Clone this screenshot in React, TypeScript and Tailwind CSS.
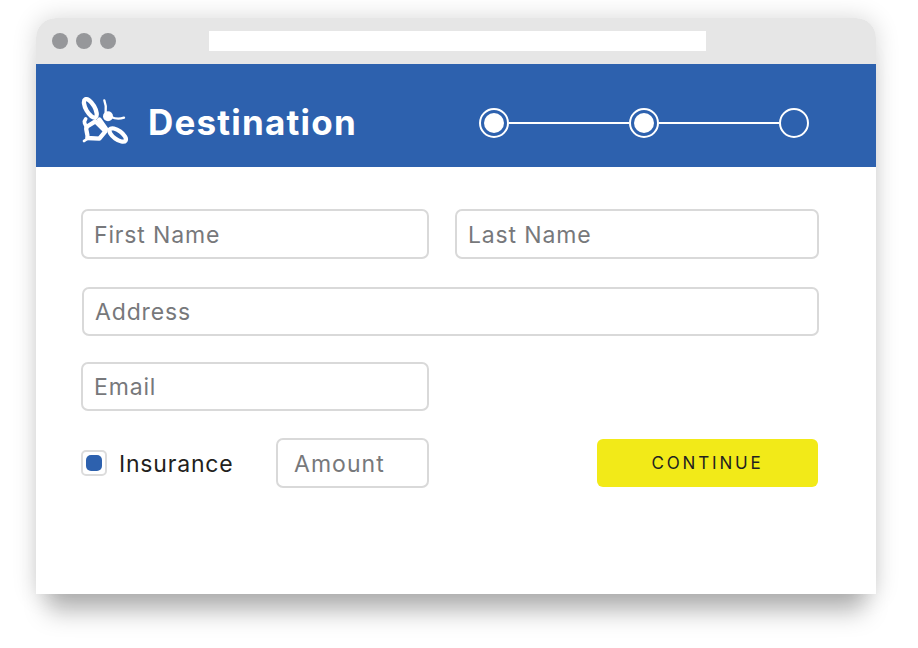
import React from 'react';

function BeeLogo() {
  return (
    <svg width="50" height="50" viewBox="33 32 150 150" fill="none" stroke="white" strokeLinecap="round" strokeLinejoin="round" className="shrink-0">
      {/* upper wing */}
      <ellipse cx="61" cy="66" rx="13" ry="31" transform="rotate(-30 61 66)" strokeWidth="13" />
      {/* body */}
      <path d="M49 122L76 105L106 135L88 157L52 155C55 143 46 132 49 122Z" strokeWidth="13" />
      <path d="M47 98C40 106 44 116 52 122" strokeWidth="11" />
      <path d="M42 164C48 158 54 156 62 155" strokeWidth="8" />
      <path d="M88 100L108 128" strokeWidth="14" />
      {/* head and feelers */}
      <circle cx="114" cy="90" r="15" fill="white" stroke="none" />
      <path d="M107 78C109 64 107 52 103 42" strokeWidth="7" />
      <path d="M124 92C136 98 150 98 162 94" strokeWidth="7" />
      {/* lower wing */}
      <ellipse cx="143" cy="146" rx="29" ry="13" transform="rotate(36 143 146)" strokeWidth="13" />
    </svg>
  );
}

function StepDot({ filled }: { filled: boolean }) {
  return (
    <div className="w-[30px] h-[30px] rounded-full border-2 border-white flex items-center justify-center shrink-0">
      {filled && <div className="w-[20px] h-[20px] rounded-full bg-white" />}
    </div>
  );
}

function Field({ label, className }: { label: string; className: string }) {
  return (
    <div className={`rounded-[7px] border-2 border-[#d9d9d9] bg-white flex items-center pl-[11px] pt-[2px] text-[23px] tracking-[0.85px] text-[#77787b] ${className}`}>
      {label}
    </div>
  );
}

export default function App() {
  return (
    <div className="w-[918px] h-[648px] bg-white pt-[18px] pl-[36px] overflow-hidden" style={{ fontFamily: '"Inter", "Liberation Sans", sans-serif' }}>
      <div className="w-[840px] h-[576px] flex flex-col rounded-t-[20px] bg-white shadow-[0_0_24px_rgba(0,0,0,0.16),0_30px_24px_-12px_rgba(0,0,0,0.26)]">
        <div className="h-[46px] shrink-0 bg-[#e6e6e6] rounded-t-[20px] flex items-center pl-4 pb-[1px]">
          <div className="flex gap-2">
            <div className="w-4 h-4 rounded-full bg-[#96979a]" />
            <div className="w-4 h-4 rounded-full bg-[#96979a]" />
            <div className="w-4 h-4 rounded-full bg-[#96979a]" />
          </div>
          <div className="ml-[93px] w-[497px] h-5 bg-white" />
        </div>

        <div className="h-[103px] shrink-0 bg-[#2d61ae] flex items-center pl-[45px] pt-[15px] pb-[1px]">
          <div className="-mt-[2px]">
            <BeeLogo />
          </div>
          <div className="ml-[17px] w-[331px] text-[35px] font-bold tracking-[1.2px] text-white leading-none">Destination</div>
          <div className="flex items-center w-[330px]">
            <StepDot filled />
            <div className="h-[2px] w-[120px] bg-white" />
            <StepDot filled />
            <div className="h-[2px] w-[120px] bg-white" />
            <StepDot filled={false} />
          </div>
        </div>

        <div className="flex-1 pl-[45px] pr-[57px] pt-[42px] flex flex-col">
          <div className="flex gap-[26px]">
            <Field label="First Name" className="w-[348px] h-[50px]" />
            <Field label="Last Name" className="w-[364px] h-[50px]" />
          </div>
          <Field label="Address" className="mt-[28px] ml-[1px] w-[737px] h-[49px]" />
          <Field label="Email" className="mt-[26px] w-[348px] h-[49px]" />
          <div className="mt-[27px] flex items-center">
            <div className="w-[26px] h-[26px] rounded-[5px] border-2 border-[#dcdcdc] flex items-center justify-center">
              <div className="w-4 h-4 rounded-[5px] bg-[#2d61ae]" />
            </div>
            <div className="ml-[12px] w-[157px] pt-[2px] text-[23px] tracking-[0.8px] text-[#231f20]">Insurance</div>
            <div className="h-[50px] w-[153px] rounded-[7px] border-2 border-[#d9d9d9] flex items-center pl-[16px] pt-[2px] text-[23px] tracking-[1.05px] text-[#77787b]">Amount</div>
            <div className="ml-[168px] h-[48px] w-[221px] rounded-[6px] bg-[#f2ea18] flex items-center justify-center pt-[1px] text-[17px] tracking-[2.85px] text-[#231f20]">CONTINUE</div>
          </div>
        </div>
      </div>
    </div>
  );
}
